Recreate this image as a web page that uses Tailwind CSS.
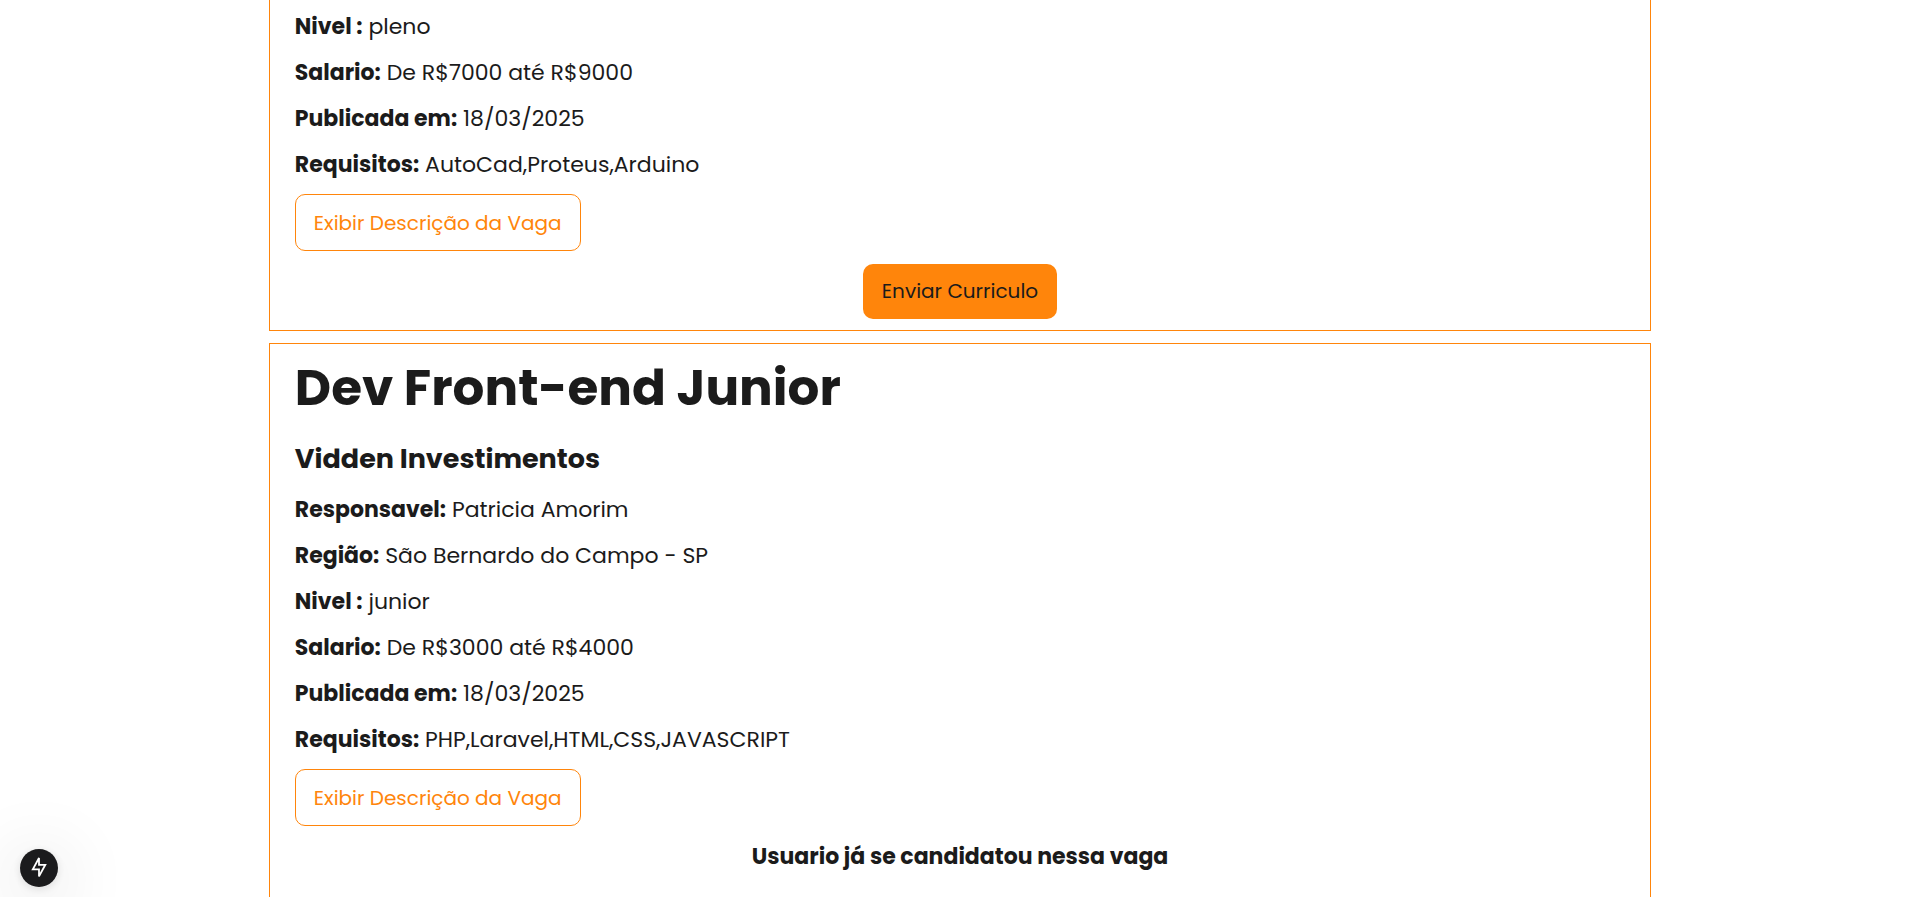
<!DOCTYPE html>
<html lang="pt-BR">
<head>
<meta charset="utf-8">
<meta name="viewport" content="width=device-width, initial-scale=1">
<title>Vagas</title>
<script src="https://cdn.jsdelivr.net/npm/@tailwindcss/browser@4"></script>
</head>
<body class="h-screen overflow-hidden bg-white font-['Poppins','Inter',sans-serif] text-[#1b1b1b]">
<main class="mx-auto flex w-[72%] flex-col gap-3">
  <article class="border border-t-0 border-[#ff850b] px-[25px] pt-[9px] pb-[11px]">
    <div class="flex flex-col gap-[10px] text-[22px] leading-9">
      <p><strong>Nivel :</strong> pleno</p>
      <p><strong>Salario:</strong> De R$7000 até R$9000</p>
      <p><strong>Publicada em:</strong> 18/03/2025</p>
      <p><strong>Requisitos:</strong> AutoCad,Proteus,Arduino</p>
    </div>
    <button type="button" class="mt-[11px] block rounded-[10px] border border-[#ff850b] px-[18px] pt-[13px] pb-[11px] text-xl leading-[31px] text-[#ff850b]">Exibir Descrição da Vaga</button>
    <button type="button" class="mx-auto mt-[13px] block rounded-[10px] bg-[#ff850b] px-[19px] py-3 text-xl leading-[31px]">Enviar Curriculo</button>
  </article>

  <article class="border border-[#ff850b] px-[25px] pt-2 pb-6">
    <h1 class="text-[50px] leading-[72px] font-bold">Dev Front-end Junior</h1>
    <h2 class="mt-[15px] text-[27px] leading-10 font-bold">Vidden Investimentos</h2>
    <div class="mt-[13px] flex flex-col gap-[10px] text-[22px] leading-9">
      <p><strong>Responsavel:</strong> Patricia Amorim</p>
      <p><strong>Região:</strong> São Bernardo do Campo - SP</p>
      <p><strong>Nivel :</strong> junior</p>
      <p><strong>Salario:</strong> De R$3000 até R$4000</p>
      <p><strong>Publicada em:</strong> 18/03/2025</p>
      <p><strong>Requisitos:</strong> PHP,Laravel,HTML,CSS,JAVASCRIPT</p>
    </div>
    <button type="button" class="mt-[11px] block rounded-[10px] border border-[#ff850b] px-[18px] pt-[13px] pb-[11px] text-xl leading-[31px] text-[#ff850b]">Exibir Descrição da Vaga</button>
    <p class="mt-[13px] text-center text-[22px] leading-9 font-bold">Usuario já se candidatou nessa vaga</p>
  </article>
</main>

<button type="button" aria-label="Static route" class="fixed bottom-[10px] left-5 grid size-[38px] place-items-center rounded-full bg-[#1b1b1d] text-white shadow-[0_11px_72px_rgba(0,0,0,0.24),0_2px_10px_rgba(0,0,0,0.12)]">
  <svg class="size-[22px]" viewBox="0 0 22 22" fill="none" stroke="currentColor" stroke-width="1.8" stroke-miterlimit="3" aria-hidden="true">
    <path d="M11 1V7.8H17.3L11 19.4V12.4H4.8Z"/>
  </svg>
</button>
</body>
</html>
